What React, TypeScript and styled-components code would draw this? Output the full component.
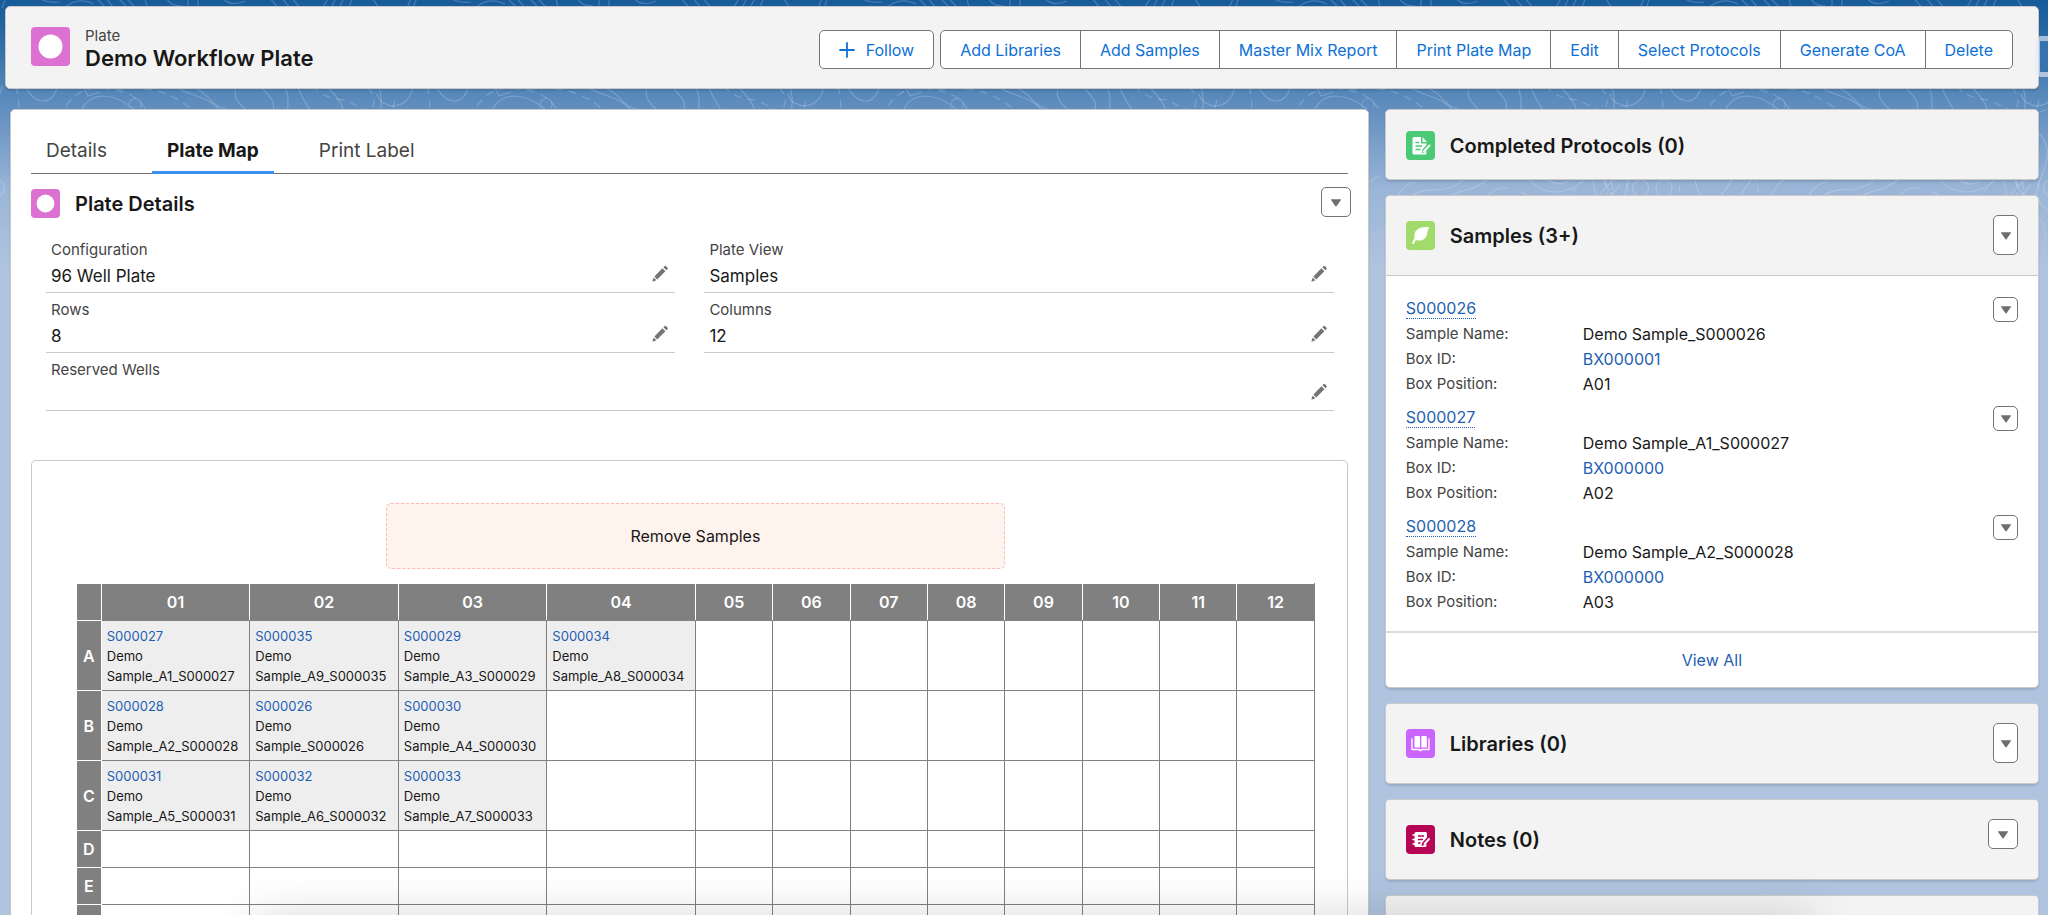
import React from "react";
import styled, { createGlobalStyle, css } from "styled-components";

const color = {
  text: "#181818",
  label: "#444444",
  link: "#1f5fb2",
  action: "#0d70d6",
  border: "#c9c9c9",
  control: "#747474",
  grid: "#808080",
  panel: "#f3f3f3",
};

const GlobalStyle = createGlobalStyle`
  * { box-sizing: border-box; }
  html { scrollbar-width: none; }
  body {
    margin: 0;
    font-family: Inter, "Liberation Sans", sans-serif;
    font-size: 15px;
    line-height: 24px;
    color: ${color.text};
    background: #b0c4df;
  }
  h1, h2, p, dl, dd, ul { margin: 0; padding: 0; }
  button, a { font: inherit; }
  a { color: ${color.link}; text-decoration: none; }
`;

const Page = styled.div`
  position: relative;
  min-height: 100vh;
  overflow-x: clip;
`;

const Backdrop = styled.div`
  position: absolute;
  inset: 0 0 auto 0;
  height: 290px;
  background: linear-gradient(#185b9a 0, #1f629f 20px, #5486b9 90px, #6490c0 112px, #9ab5d7 190px, #b0c4df 270px);

  svg {
    display: block;
    width: 100%;
    height: 100%;
    mask-image: linear-gradient(#000 200px, transparent 270px);
  }
`;

const Content = styled.div`
  position: relative;
  padding: 6px 9px 0 5px;
`;

const cardStyle = css`
  border: 1px solid ${color.border};
  border-radius: 5px;
  box-shadow: 0 2px 2px rgba(0, 0, 0, 0.12);
`;

const RecordHeader = styled.header`
  ${cardStyle}
  display: flex;
  align-items: flex-start;
  justify-content: space-between;
  height: 83px;
  padding: 20px 25px;
  background: ${color.panel};
`;

const RecordTitle = styled.div`
  display: flex;
  gap: 15px;

  p {
    line-height: 18px;
    color: ${color.label};
  }
  h1 {
    font-size: 22px;
    line-height: 26px;
    font-weight: 600;
  }
`;

const Actions = styled.div`
  display: flex;
  gap: 6px;
  padding-top: 3px;
`;

const ActionGroup = styled.div`
  display: flex;

  button + button { margin-left: -1px; }
  button:not(:first-child) { border-top-left-radius: 0; border-bottom-left-radius: 0; }
  button:not(:last-child) { border-top-right-radius: 0; border-bottom-right-radius: 0; }
`;

const ActionButton = styled.button`
  display: flex;
  align-items: center;
  gap: 11px;
  height: 39px;
  padding: 0 19px;
  border: 1px solid ${color.control};
  border-radius: 5px;
  background: #fff;
  color: ${color.action};
  font-size: 16px;
  white-space: nowrap;
`;

const Columns = styled.main`
  display: grid;
  grid-template-columns: 27fr 13fr;
  align-items: start;
  gap: 16px;
  padding: 20px 0 0 5px;
`;

const PlateCard = styled.section`
  ${cardStyle}
  padding: 17px 20px 20px;
  background: #fff;
`;

const Tabs = styled.nav`
  display: flex;
  gap: 30px;
  height: 47px;
  border-bottom: 1px solid ${color.control};
`;

const Tab = styled.a<{ $active?: boolean }>`
  padding: 0 15px;
  margin-bottom: -1px;
  border-bottom: 3px solid ${(p) => (p.$active ? "#3b8ff5" : "transparent")};
  font-size: 19px;
  line-height: 48px;
  font-weight: ${(p) => (p.$active ? 700 : 400)};
  color: ${(p) => (p.$active ? color.text : color.label)};
`;

const SectionHeader = styled.div`
  display: flex;
  justify-content: space-between;
  align-items: flex-start;
  height: 59px;
  margin-right: -3px;
  padding-top: 13px;
`;

const Heading = styled.div`
  display: flex;
  align-items: center;
  gap: 15px;
  height: 32px;

  h2 {
    padding-top: 2px;
    font-size: 20px;
    line-height: 24px;
    font-weight: 600;
  }
`;

const IconTile = styled.span<{ $color: string; $large?: boolean }>`
  display: flex;
  align-items: center;
  justify-content: center;
  flex: none;
  width: ${(p) => (p.$large ? 39 : 29)}px;
  height: ${(p) => (p.$large ? 39 : 29)}px;
  border-radius: 4px;
  background: ${(p) => p.$color};

  svg {
    width: 100%;
    height: 100%;
  }
`;

const MenuButton = styled.button<{ $shape?: "tall" | "small" }>`
  display: flex;
  align-items: center;
  justify-content: center;
  flex: none;
  width: ${(p) => (p.$shape ? 25 : 30)}px;
  height: ${(p) => (p.$shape === "tall" ? 40 : p.$shape === "small" ? 25 : 30)}px;
  padding: 2px 0 0;
  border: 1px solid ${color.control};
  border-radius: 5px;
  background: #fff;
`;

const Fields = styled.dl`
  display: grid;
  grid-template-columns: 1fr 1fr;
  column-gap: 29px;
  padding: 0 14px 0 15px;
`;

const Field = styled.div<{ $wide?: boolean }>`
  grid-column: ${(p) => (p.$wide ? "1 / -1" : "auto")};
  padding: 7px 5px 4px;
  border-bottom: 1px solid ${color.border};

  dt {
    line-height: 20px;
    color: ${color.label};
  }
  dd {
    display: flex;
    justify-content: space-between;
    align-items: flex-end;
    height: ${(p) => (p.$wide ? 26 : 28)}px;
    font-size: 17px;
  }
`;

const EditButton = styled.button`
  width: 20px;
  height: 20px;
  margin: 0 0 4px auto;
  padding: 0;
  border: 0;
  background: none;

  svg { display: block; }
`;

const PlateFrame = styled.div`
  display: flex;
  flex-direction: column;
  align-items: center;
  gap: 14px;
  margin-top: 49px;
  padding: 42px 32px 42px 44px;
  border: 1px solid ${color.border};
  border-radius: 5px;
`;

const RemoveZone = styled.div`
  width: 50%;
  padding: 20px;
  border: 1px dashed #ffb8b8;
  border-radius: 5px;
  background: #fff3ee;
  font-size: 16px;
  text-align: center;
`;

const PlateTable = styled.table`
  width: 100%;
  table-layout: fixed;
  border-collapse: collapse;

  th {
    height: 37px;
    padding: 0;
    border: 1px solid #fff;
    background: ${color.grid};
    color: #fff;
    font-size: 16px;
    font-weight: 600;
  }
  thead th { border-bottom-color: ${color.grid}; }
  thead th:first-child { border-bottom-color: #fff; }
  thead th:last-child { border-right-color: ${color.grid}; }
  td {
    padding: 5px 5px 4px;
    border: 1px solid ${color.grid};
    vertical-align: top;
    font-size: 13px;
    line-height: 20px;
  }
`;

const PlateColumn = styled.col<{ $size: string }>`
  width: ${(p) => p.$size};
`;

const Well = styled.td<{ $filled: boolean }>`
  background: ${(p) => (p.$filled ? "#eeeeee" : "#ffffff")};
`;

const Sidebar = styled.aside`
  display: flex;
  flex-direction: column;
  gap: 15px;
`;

const RelatedCard = styled.section`
  ${cardStyle}
  overflow: hidden;
  background: #fff;
`;

const RelatedHeader = styled.div<{ $compact?: boolean }>`
  display: flex;
  justify-content: space-between;
  align-items: flex-start;
  height: ${(p) => (p.$compact ? 69 : 79)}px;
  padding: 19px 20px;
  background: ${color.panel};

  ${Heading} { height: ${(p) => (p.$compact ? 32 : 40)}px; }
`;

const SampleList = styled.ul`
  display: flex;
  flex-direction: column;
  gap: 9px;
  padding: 20px 20px 17px;
  border-top: 1px solid ${color.border};
  list-style: none;
`;

const SampleTop = styled.div`
  display: flex;
  justify-content: space-between;
  align-items: center;
  height: 26px;

  a {
    border-bottom: 1px dotted ${color.link};
    font-size: 16px;
    line-height: 19px;
  }
`;

const SampleFacts = styled.dl`
  display: grid;
  grid-template-columns: 177px 1fr;
  row-gap: 1px;

  dt { color: ${color.label}; }
  dd { font-size: 16px; }
`;

const CardFooter = styled.div`
  padding: 15px;
  border-top: 2px solid #dddddd;
  font-size: 16px;
  text-align: center;
`;

const PanelHandle = styled.button`
  position: absolute;
  top: 36px;
  right: -8px;
  width: 21px;
  height: 41px;
  border: 5px solid rgba(230, 236, 244, 0.65);
  border-radius: 6px;
  background: #3573ae;
  background-clip: padding-box;
  padding: 0;
`;

const BottomShade = styled.div`
  position: fixed;
  bottom: -36px;
  left: 13%;
  right: 12%;
  height: 20px;
  box-shadow: 0 0 50px 10px rgba(0, 0, 0, 0.2);
  pointer-events: none;
`;

function Contours() {
  return (
    <svg aria-hidden="true">
      <defs>
        <pattern id="contours" x="-24" width="411" height="290" patternUnits="userSpaceOnUse">
          <g fill="none" stroke="#fff" strokeOpacity="0.2" strokeWidth="1.2">
            <path d="M20 8Q24 -2 28 -8M26 8Q30 -2 32 -8M60 -4q10 8 24 6M88 8q14 -12 30 -4M118 -4l12 12M128 -4l10 12M140 -4l12 12M148 -4l12 12M170 -4q-2 8 4 14M190 -4q2 10 16 10M212 -4v14M222 -4v14M245 -4q8 12 24 5M292 -4l12 14M304 -4l12 14M314 -4l12 14M345 10l10 -16M354 10l8 -16M362 10l8 -16M372 10l6 -16M395 -4l8 12" />
            <path d="M-10 94C-6 110 22 112 26 86M48 84C56 102 74 110 82 86M106 109C116 90 140 94 158 109M108 88l4 8 12 -4M154 108a6 6 0 1 1 10 0M196 84C214 98 230 94 244 110M210 84C240 96 230 104 252 110M262 84C254 96 264 104 270 110M284 84C290 96 300 98 297 110M308 84q6 14 3 28M320 84q6 14 14 26M401 94c2 6 6 10 10 10M348 84q20 18 20 30" />
            <path strokeDasharray="8 6" d="M40 86q4 14 2 26M90 106q16 -24 46 -16q24 2 34 20M140 90C180 84 200 96 222 114M336 86q14 14 34 14q14 8 24 12q10 -14 -4 -26" />
            <path d="M-14 150C-6 120 8 110 16 110M20 180a8 8 0 1 1 1 16a8 8 0 0 1 -1 -16M36 188a8 8 0 1 0 16 0a8 8 0 1 0 -16 0M75 176q0 16 10 24M98 200q20 -30 34 -40M118 200q16 -28 34 -40M150 200q6 -18 20 -24M188 200q4 -16 20 -18M200 200q8 -12 30 -10q24 -4 26 -16M212 200q20 2 38 -8q20 -4 30 -14M276 200q8 -14 24 -12M318 176q10 16 30 16q20 -2 30 -16M334 176q8 8 18 8q8 -2 12 -8M388 200q8 -16 22 -22M398 200l14 -16" />
            <path strokeDasharray="6 5" d="M134 176q6 12 4 26M64 176q-10 14 2 26M312 192q40 20 60 -10" />
            <path d="M0 110C-10 130 20 130 16 158S-6 190 16 210M398 40C380 70 416 80 402 120S390 190 412 200M376 110C400 130 380 150 384 180S400 220 386 250M2 214q18 8 10 40M392 120C404 150 396 160 404 190M380 230q12 -8 20 10t12 14" />
            <path strokeDasharray="8 6" d="M8 100q-8 30 -4 50t4 60M406 110q-14 30 -10 70t8 60" />
          </g>
        </pattern>
      </defs>
      <rect width="100%" height="100%" fill="url(#contours)" />
    </svg>
  );
}

const Triangle = () => (
  <svg width="12" height="8" viewBox="0 0 12 8" aria-hidden="true">
    <path d="M1.400 0.300h9.200q0.600 0.200 0.300 0.800L6.500 7.300q-0.500 0.500 -1 0L1.100 1.100q-0.300 -0.600 0.300 -0.800z" fill="#706e6b" />
  </svg>
);

const Pencil = () => (
  <svg width="20" height="20" viewBox="0 0 20 20" fill="#747474" aria-hidden="true">
    <path d="M4.4 12.6l8 -8.4 3 3 -8.2 8.2zM13.4 3.300l1.200 -1.300q0.600 -0.500 1.200 0l1.800 1.800q0.500 0.600 0 1.200l-1.200 1.300zM3.700 13.500l2.800 2.800 -3.300 1.300q-0.800 0.100 -0.700 -0.600z" />
  </svg>
);

const PlateIcon = ({ large }: { large?: boolean }) => (
  <IconTile $color="#dc71d1" $large={large}>
    <svg viewBox="0 0 39 39" aria-hidden="true">
      <circle cx="19.5" cy="19.5" r="12" fill="#fff" />
    </svg>
  </IconTile>
);

const ProtocolIcon = () => (
  <IconTile $color="#4bca76">
    <svg viewBox="0 0 29 29" aria-hidden="true">
      <path d="M8 6h7v5.500q0 1 1 1h4.500v1.500l-4 4.500 -.5 3.500 3 -.5 1.500 -1.500v2q0 1.500 -1.500 1.500H8q-1.500 0 -1.500 -1.500V7.500Q6.500 6 8 6zM16.500 6l4 4.500v.5h-4z" fill="#fff" />
      <path d="M9.500 11.500h3.500M9.500 15h6.500M9.500 18.500h5" stroke="#4bca76" strokeWidth="1.500" />
      <path d="M23.500 14.500l-5.500 6" stroke="#fff" strokeWidth="2" strokeLinecap="round" />
    </svg>
  </IconTile>
);

const LeafIcon = () => (
  <IconTile $color="#a0db6b">
    <svg viewBox="0 0 29 29" aria-hidden="true">
      <path d="M22.500 6.500C15 6 10 8 9 12.500q-.7 3 .5 4.500 1.500 -3.500 5 -6 -7 6 -8 11 .2 1 1.200 .5l2 -4c5 1.500 9 .5 10.500 -4 1.200 -3 .5 -6 2.800 -7.200z" fill="#fff" stroke="#fff" strokeWidth="0.800" strokeLinejoin="round" />
    </svg>
  </IconTile>
);

const BookIcon = () => (
  <IconTile $color="#cb65ff">
    <svg viewBox="0 0 29 29" aria-hidden="true">
      <path d="M9 7h4q1 0 1 1v10.500H8.500V8q0 -1 .5 -1zM16 7h4q.8 0 .8 1v10.500h-5.500V8q0 -1 .7 -1z" fill="#fff" />
      <path d="M6 10v10.500h6.500q1.500 0 2 1.200 .5 -1.200 2 -1.200H23V10" fill="none" stroke="#fff" strokeWidth="1.400" strokeLinejoin="round" strokeLinecap="round" />
    </svg>
  </IconTile>
);

const NoteIcon = () => (
  <IconTile $color="#b60554">
    <svg viewBox="0 0 29 29" aria-hidden="true">
      <path d="M10 7h9.500q1.500 0 1.500 1.500v4l-5 5.500 -.5 3 3.500 -1 1.500 -1q.5 3 -1.500 3H10q-1.500 0 -1.500 -1.500v-12Q8.500 7 10 7z" fill="#fff" />
      <path d="M7 10h3M7 14.500h3M7 19h3" stroke="#fff" strokeWidth="1.600" strokeLinecap="round" />
      <path d="M12 11h6M12 14.500h5M12 18h2.500" stroke="#b60554" strokeWidth="1.400" />
      <path d="M23 14l-4.500 5" stroke="#fff" strokeWidth="1.900" strokeLinecap="round" />
    </svg>
  </IconTile>
);

const recordActions = [
  "Add Libraries",
  "Add Samples",
  "Master Mix Report",
  "Print Plate Map",
  "Edit",
  "Select Protocols",
  "Generate CoA",
  "Delete",
];

const plateFields = [
  { label: "Configuration", value: "96 Well Plate" },
  { label: "Plate View", value: "Samples" },
  { label: "Rows", value: "8" },
  { label: "Columns", value: "12" },
  { label: "Reserved Wells", value: "", wide: true },
];

const columnNames = ["01", "02", "03", "04", "05", "06", "07", "08", "09", "10", "11", "12"];

type WellSample = { id: string; name: string };

const plateRows: { row: string; wells: WellSample[] }[] = [
  {
    row: "A",
    wells: [
      { id: "S000027", name: "Demo Sample_A1_S000027" },
      { id: "S000035", name: "Demo Sample_A9_S000035" },
      { id: "S000029", name: "Demo Sample_A3_S000029" },
      { id: "S000034", name: "Demo Sample_A8_S000034" },
    ],
  },
  {
    row: "B",
    wells: [
      { id: "S000028", name: "Demo Sample_A2_S000028" },
      { id: "S000026", name: "Demo Sample_S000026" },
      { id: "S000030", name: "Demo Sample_A4_S000030" },
    ],
  },
  {
    row: "C",
    wells: [
      { id: "S000031", name: "Demo Sample_A5_S000031" },
      { id: "S000032", name: "Demo Sample_A6_S000032" },
      { id: "S000033", name: "Demo Sample_A7_S000033" },
    ],
  },
  { row: "D", wells: [] },
  { row: "E", wells: [] },
  { row: "F", wells: [] },
  { row: "G", wells: [] },
  { row: "H", wells: [] },
];

const relatedSamples = [
  { id: "S000026", name: "Demo Sample_S000026", box: "BX000001", position: "A01" },
  { id: "S000027", name: "Demo Sample_A1_S000027", box: "BX000000", position: "A02" },
  { id: "S000028", name: "Demo Sample_A2_S000028", box: "BX000000", position: "A03" },
];

export default function App() {
  return (
    <>
      <GlobalStyle />
      <Page>
        <Backdrop>
          <Contours />
        </Backdrop>
        <Content>
          <RecordHeader>
            <RecordTitle>
              <PlateIcon large />
              <div>
                <p>Plate</p>
                <h1>Demo Workflow Plate</h1>
              </div>
            </RecordTitle>
            <Actions>
              <ActionButton type="button">
                <svg width="16" height="16" viewBox="0 0 16 16" aria-hidden="true">
                  <path d="M8 1v14M1 8h14" stroke="currentColor" strokeWidth="1.8" strokeLinecap="round" />
                </svg>
                Follow
              </ActionButton>
              <ActionGroup>
                {recordActions.map((name) => (
                  <ActionButton type="button" key={name}>
                    {name}
                  </ActionButton>
                ))}
              </ActionGroup>
            </Actions>
          </RecordHeader>

          <Columns>
            <PlateCard>
              <Tabs>
                <Tab href="#details">Details</Tab>
                <Tab href="#plate-map" $active aria-current="page">
                  Plate Map
                </Tab>
                <Tab href="#print-label">Print Label</Tab>
              </Tabs>
              <SectionHeader>
                <Heading>
                  <PlateIcon />
                  <h2>Plate Details</h2>
                </Heading>
                <MenuButton type="button" aria-label="Plate details actions">
                  <Triangle />
                </MenuButton>
              </SectionHeader>
              <Fields>
                {plateFields.map((f) => (
                  <Field key={f.label} $wide={f.wide}>
                    <dt>{f.label}</dt>
                    <dd>
                      {f.value}
                      <EditButton type="button" aria-label={`Edit ${f.label}`}>
                        <Pencil />
                      </EditButton>
                    </dd>
                  </Field>
                ))}
              </Fields>
              <PlateFrame>
                <RemoveZone>Remove Samples</RemoveZone>
                <PlateTable>
                  <colgroup>
                    <PlateColumn $size="2%" />
                    {columnNames.map((c, i) => (
                      <PlateColumn key={c} $size={i < 4 ? "12%" : "auto"} />
                    ))}
                  </colgroup>
                  <thead>
                    <tr>
                      <th aria-label="Row" />
                      {columnNames.map((c) => (
                        <th key={c} scope="col">
                          {c}
                        </th>
                      ))}
                    </tr>
                  </thead>
                  <tbody>
                    {plateRows.map(({ row, wells }) => (
                      <tr key={row}>
                        <th scope="row">{row}</th>
                        {columnNames.map((c, i) => (
                          <Well key={c} $filled={Boolean(wells[i])}>
                            {wells[i] && (
                              <>
                                <a href={`#${wells[i].id}`}>{wells[i].id}</a>
                                <p>{wells[i].name}</p>
                              </>
                            )}
                          </Well>
                        ))}
                      </tr>
                    ))}
                  </tbody>
                </PlateTable>
              </PlateFrame>
            </PlateCard>

            <Sidebar>
              <RelatedCard>
                <RelatedHeader $compact>
                  <Heading>
                    <ProtocolIcon />
                    <h2>Completed Protocols (0)</h2>
                  </Heading>
                </RelatedHeader>
              </RelatedCard>
              <RelatedCard>
                <RelatedHeader>
                  <Heading>
                    <LeafIcon />
                    <h2>Samples (3+)</h2>
                  </Heading>
                  <MenuButton type="button" $shape="tall" aria-label="Samples actions">
                    <Triangle />
                  </MenuButton>
                </RelatedHeader>
                <SampleList>
                  {relatedSamples.map((s) => (
                    <li key={s.id}>
                      <SampleTop>
                        <a href={`#${s.id}`}>{s.id}</a>
                        <MenuButton type="button" $shape="small" aria-label={`${s.id} actions`}>
                          <Triangle />
                        </MenuButton>
                      </SampleTop>
                      <SampleFacts>
                        <dt>Sample Name:</dt>
                        <dd>{s.name}</dd>
                        <dt>Box ID:</dt>
                        <dd>
                          <a href={`#${s.box}`}>{s.box}</a>
                        </dd>
                        <dt>Box Position:</dt>
                        <dd>{s.position}</dd>
                      </SampleFacts>
                    </li>
                  ))}
                </SampleList>
                <CardFooter>
                  <a href="#all-samples">View All</a>
                </CardFooter>
              </RelatedCard>
              <RelatedCard>
                <RelatedHeader>
                  <Heading>
                    <BookIcon />
                    <h2>Libraries (0)</h2>
                  </Heading>
                  <MenuButton type="button" $shape="tall" aria-label="Libraries actions">
                    <Triangle />
                  </MenuButton>
                </RelatedHeader>
              </RelatedCard>
              <RelatedCard>
                <RelatedHeader>
                  <Heading>
                    <NoteIcon />
                    <h2>Notes (0)</h2>
                  </Heading>
                  <MenuButton type="button" aria-label="Notes actions">
                    <Triangle />
                  </MenuButton>
                </RelatedHeader>
              </RelatedCard>
              <RelatedCard>
                <RelatedHeader />
              </RelatedCard>
            </Sidebar>
          </Columns>
          <PanelHandle type="button" aria-label="Open side panel" />
        </Content>
        <BottomShade />
      </Page>
    </>
  );
}
